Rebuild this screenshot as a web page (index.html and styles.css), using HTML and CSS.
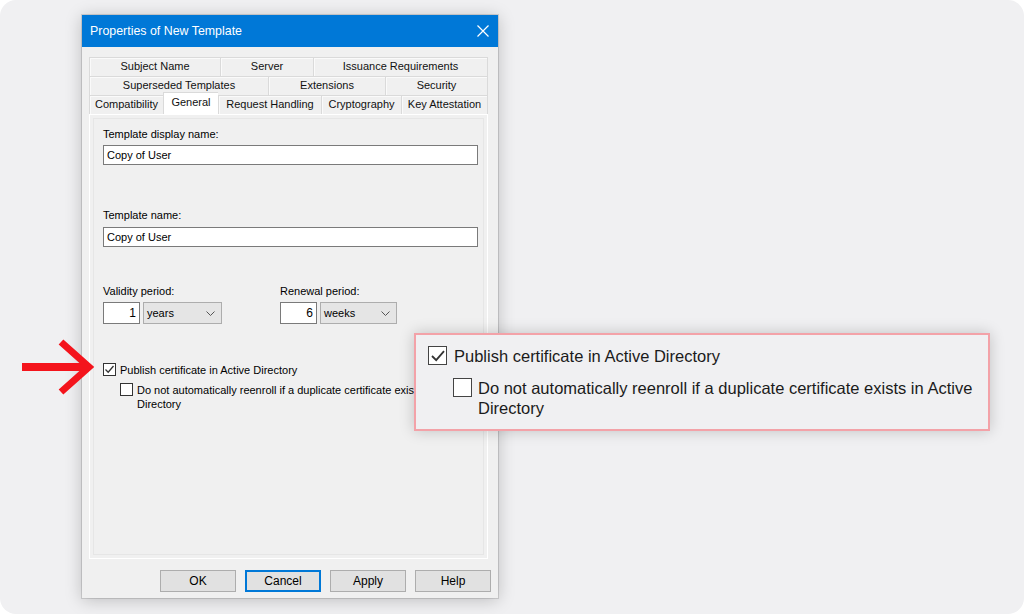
FILE: index.html
```html
<!DOCTYPE html>
<html lang="en">
<head>
  <meta charset="UTF-8">
  <title>Properties of New Template</title>
  <link rel="stylesheet" href="styles.css">
</head>
<body>
  <div class="frame">
    <div class="dialog">
      <div class="titlebar">
        <span class="title">Properties of New Template</span>
        <svg class="close" width="12" height="12" viewBox="0 0 12 12">
          <path d="M0.5 0.5 L11.5 11.5 M11.5 0.5 L0.5 11.5" stroke="#fff" stroke-width="1.2" fill="none"/>
        </svg>
      </div>

      <div class="tabs">
        <div class="tab-row">
          <div class="tab" style="width:131px">Subject Name</div>
          <div class="tab" style="width:93px">Server</div>
          <div class="tab" style="width:175px">Issuance Requirements</div>
        </div>
        <div class="tab-row">
          <div class="tab" style="width:179px">Superseded Templates</div>
          <div class="tab" style="width:117px">Extensions</div>
          <div class="tab" style="width:103px">Security</div>
        </div>
        <div class="tab-row">
          <div class="tab" style="width:74px">Compatibility</div>
          <div class="tab active" style="width:55px">General</div>
          <div class="tab" style="width:103px">Request Handling</div>
          <div class="tab" style="width:80px">Cryptography</div>
          <div class="tab" style="width:87px">Key Attestation</div>
        </div>
      </div>

      <div class="panel">
        <div class="page">
          <label class="field-label">Template display name:</label>
          <div class="textbox">Copy of User</div>

          <label class="field-label second">Template name:</label>
          <div class="textbox">Copy of User</div>

          <div class="periods">
            <div class="period">
              <label class="field-label">Validity period:</label>
              <div class="period-inputs">
                <div class="num">1</div>
                <div class="combo years">years
                  <svg width="9" height="5" viewBox="0 0 9 5"><path d="M0.5 0.5 L4.5 4.5 L8.5 0.5" stroke="#555" fill="none"/></svg>
                </div>
              </div>
            </div>
            <div class="period">
              <label class="field-label">Renewal period:</label>
              <div class="period-inputs">
                <div class="num">6</div>
                <div class="combo weeks">weeks
                  <svg width="9" height="5" viewBox="0 0 9 5"><path d="M0.5 0.5 L4.5 4.5 L8.5 0.5" stroke="#555" fill="none"/></svg>
                </div>
              </div>
            </div>
          </div>

          <div class="check-row">
            <span class="box">
              <svg width="11" height="11" viewBox="0 0 11 11"><path d="M1.5 5.5 L4.2 8.2 L9.5 2" stroke="#333" stroke-width="1.3" fill="none"/></svg>
            </span>
            <span>Publish certificate in Active Directory</span>
          </div>
          <div class="check-row sub">
            <span class="box"></span>
            <span>Do not automatically reenroll if a duplicate certificate exists in Active<br>Directory</span>
          </div>
        </div>
      </div>

      <div class="buttons">
        <button class="btn">OK</button>
        <button class="btn default">Cancel</button>
        <button class="btn">Apply</button>
        <button class="btn">Help</button>
      </div>
    </div>

    <!-- zoomed callout -->
    <div class="callout">
      <div class="big-row">
        <span class="big-box">
          <svg width="16" height="16" viewBox="0 0 16 16"><path d="M2 8 L6.2 12.2 L14 3.2" stroke="#333" stroke-width="1.8" fill="none"/></svg>
        </span>
        <span>Publish certificate in Active Directory</span>
      </div>
      <div class="big-row sub">
        <span class="big-box"></span>
        <span>Do not automatically reenroll if a duplicate certificate exists in Active<br>Directory</span>
      </div>
    </div>

    <svg class="arrow" width="80" height="62" viewBox="18 336 80 62">
      <path d="M22 367 L88 367" stroke="#f4141c" stroke-width="8" fill="none"/>
      <path d="M61 342 L89 367 L61 392" stroke="#f4141c" stroke-width="7" fill="none"/>
    </svg>
  </div>
</body>
</html>
```

FILE: styles.css
```css
body {
  margin: 0;
  background-color: #fff;
  font-family: 'Liberation Sans', Arial, sans-serif;
}

.frame {
  position: relative;
  width: 1024px;
  height: 614px;
  box-sizing: border-box;
  padding: 15px 0 0 82px;
  border-radius: 16px;
  background-color: #f0f0f2;
  overflow: hidden;
}

.dialog {
  width: 416px;
  height: 583px;
  background-color: #f0f0f0;
  box-shadow: 0 0 0 1px rgba(0, 0, 0, 0.12), 0 2px 16px rgba(0, 0, 0, 0.22);
  display: flex;
  flex-direction: column;
}

.titlebar {
  height: 32px;
  background-color: #0078d7;
  display: flex;
  align-items: center;
  justify-content: space-between;
  padding: 0 9px 0 8px;
}

.title {
  color: #fff;
  font-size: 12.4px;
}

.tabs {
  margin: 10px 0 0 7px;
  width: 399px;
  font-size: 11px;
}

.tab-row {
  display: flex;
  height: 19px;
}

.tab {
  box-sizing: border-box;
  height: 19px;
  line-height: 17px;
  text-align: center;
  border: 1px solid #dadada;
  border-right: none;
  border-bottom: none;
  box-shadow: inset 1px 1px 0 #fafafa;
  white-space: nowrap;
  color: #111;
}

.tab:last-child {
  border-right: 1px solid #dadada;
}

.tab.active {
  background-color: #fff;
  height: 22px;
  margin-top: -3px;
  line-height: 18px;
  position: relative;
  z-index: 1;
  box-shadow: none;
}

.panel {
  margin-left: 7px;
  width: 399px;
  height: 445px;
  box-sizing: border-box;
  border: 1px solid #fff;
  padding: 3px;
}

.page {
  height: 100%;
  box-sizing: border-box;
  border: 1px solid #e6e6e6;
  padding: 9px 0 0 9px;
  font-size: 11px;
  color: #000;
}

.field-label {
  display: block;
  line-height: 13px;
  margin-bottom: 4px;
}

.field-label.second {
  margin-top: 44px;
  margin-bottom: 5px;
}

.textbox {
  width: 375px;
  height: 20px;
  box-sizing: border-box;
  border: 1px solid #7a7a7a;
  background-color: #fff;
  line-height: 18px;
  padding-left: 3px;
}

.periods {
  display: flex;
  margin-top: 38px;
}

.period {
  width: 177px;
}

.period .field-label {
  margin-bottom: 4px;
}

.period-inputs {
  display: flex;
  gap: 3px;
}

.num {
  width: 37px;
  height: 22px;
  box-sizing: border-box;
  border: 1px solid #7a7a7a;
  background-color: #fff;
  text-align: right;
  line-height: 20px;
  padding-right: 3px;
  font-size: 12px;
}

.combo {
  height: 22px;
  box-sizing: border-box;
  border: 1px solid #adadad;
  background-color: #e5e5e5;
  display: flex;
  align-items: center;
  justify-content: space-between;
  padding: 0 6px 0 3px;
}

.combo.years {
  width: 79px;
}

.combo.weeks {
  width: 77px;
}

.check-row {
  display: flex;
  align-items: flex-start;
  gap: 4px;
  margin-top: 39px;
  line-height: 14px;
  white-space: nowrap;
}

.check-row.sub {
  margin-top: 6px;
  margin-left: 17px;
}

.box {
  width: 13px;
  height: 13px;
  box-sizing: border-box;
  border: 1px solid #333;
  background-color: #fff;
  display: flex;
  align-items: center;
  justify-content: center;
  flex-shrink: 0;
}

.buttons {
  display: flex;
  justify-content: flex-end;
  gap: 9px;
  margin: 11px 7px 0 0;
}

.btn {
  width: 76px;
  height: 22px;
  box-sizing: border-box;
  border: 1px solid #adadad;
  background-color: #e1e1e1;
  font-family: 'Liberation Sans', Arial, sans-serif;
  font-size: 12px;
  color: #000;
  padding: 0;
}

.btn.default {
  border-color: #0078d7;
  box-shadow: inset 0 0 0 1px #0078d7;
}

/* zoom box over the dialog */
.callout {
  position: absolute;
  left: 414px;
  top: 333px;
  width: 576px;
  height: 98px;
  box-sizing: border-box;
  border: 2px solid #f3a2a8;
  background-color: #f0f0f2;
  box-shadow: 0 0 14px rgba(0, 0, 0, 0.2);
  padding: 11px 12px;
  font-size: 16.5px;
  color: #1b1b1b;
}

.big-row {
  display: flex;
  align-items: flex-start;
  gap: 7px;
  line-height: 20px;
  white-space: nowrap;
}

.big-row.sub {
  margin: 12px 0 0 25px;
  gap: 6px;
}

.big-box {
  width: 19px;
  height: 19px;
  box-sizing: border-box;
  border: 1.5px solid #444;
  background-color: #fff;
  display: flex;
  align-items: center;
  justify-content: center;
  flex-shrink: 0;
}

.arrow {
  position: absolute;
  left: 18px;
  top: 336px;
}
```
